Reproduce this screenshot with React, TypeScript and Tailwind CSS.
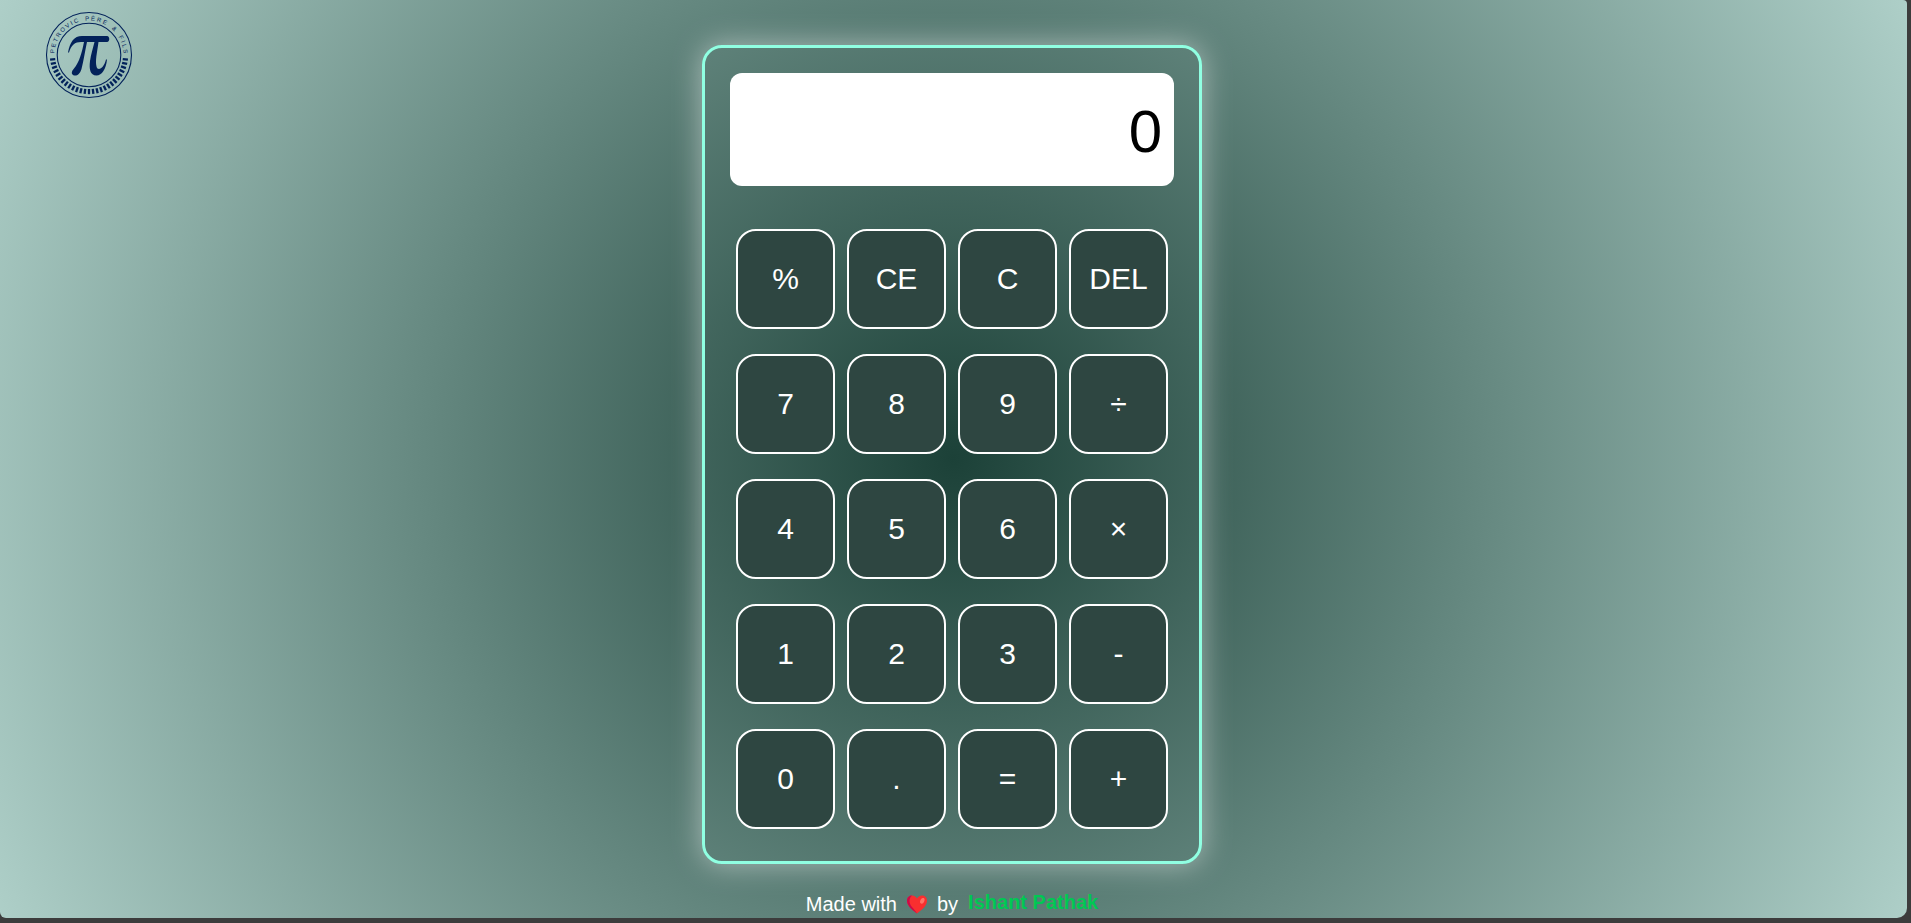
import { useState } from "react";

const keys = ["%", "CE", "C", "DEL", "7", "8", "9", "÷", "4", "5", "6", "×", "1", "2", "3", "-", "0", ".", "=", "+"];

const operators: Record<string, (a: number, b: number) => number> = {
  "+": (a, b) => a + b,
  "-": (a, b) => a - b,
  "×": (a, b) => a * b,
  "÷": (a, b) => a / b,
};

const ticks = Array.from({ length: 27 }, (_, i) => (i - 13) * 6.4);

function Logo() {
  return (
    <svg viewBox="0 0 88 88" className="size-[88px]" role="img" aria-label="Petrovic Père & Fils" fill="none" stroke="#03225a">
      <circle cx="44" cy="44" r="42.5" strokeWidth="1.1" />
      <circle cx="44" cy="44" r="31.8" strokeWidth="1.1" />
      {ticks.map((angle) => (
        <path key={angle} d="M44 78V83.200" strokeWidth="2.3" transform={`rotate(${angle} 44 44)`} />
      ))}
      <path id="logo-arc" d="M9.5 48A34.7 34.7 0 1 1 78.5 48" stroke="none" />
      <text className="text-[6px]" fill="#03225a" stroke="none" fontFamily="'Liberation Sans', sans-serif">
        <textPath href="#logo-arc" startOffset="50%" textAnchor="middle">
          P E T R O V I C &#160; &#160;P È R E &#160; &#160;&amp; &#160; &#160;F I L S
        </textPath>
      </text>
      <path
        d="M23 41.500C25 31 29 25 37 25H62C65 25 65 31 62 31H53.500C52 42 50 50 51.500 55.500C53 61 59 57 61 48.500H62C61 58 57 64.500 51.500 64.500C45 64.500 44 58 45 50C46 43 48 37 49.500 31H42C40 40 38.500 50 36.500 58C35 63 32 65 29.500 64.500C26 64 26 60.500 29 57.500C34.500 51 37 41 39 31H36C30 31 26 34 24 41.500Z"
        fill="#03225a"
        stroke="none"
      />
    </svg>
  );
}

export default function App() {
  const [display, setDisplay] = useState("0");
  const [stored, setStored] = useState<number | null>(null);
  const [operator, setOperator] = useState<string | null>(null);
  const [fresh, setFresh] = useState(true);

  const result = () =>
    operator && stored !== null ? operators[operator](stored, Number(display)) : Number(display);

  const press = (key: string) => {
    if (key === "C") {
      setDisplay("0");
      setStored(null);
      setOperator(null);
      setFresh(true);
    } else if (key === "CE") {
      setDisplay("0");
      setFresh(true);
    } else if (key === "DEL") {
      setDisplay(display.length > 1 ? display.slice(0, -1) : "0");
    } else if (key === "%") {
      setDisplay(String(Number(display) / 100));
    } else if (key === "=") {
      setDisplay(String(result()));
      setStored(null);
      setOperator(null);
      setFresh(true);
    } else if (key in operators) {
      const value = result();
      setDisplay(String(value));
      setStored(value);
      setOperator(key);
      setFresh(true);
    } else if (key === ".") {
      if (fresh) setDisplay("0.");
      else if (!display.includes(".")) setDisplay(display + ".");
      setFresh(false);
    } else {
      setDisplay(fresh || display === "0" ? key : display + key);
      setFresh(false);
    }
  };

  return (
    <div className="min-h-screen bg-[#3c3c3c] pr-1 pb-[5px] font-['Liberation_Sans',Arial,sans-serif]">
      <div className="grid min-h-[calc(100vh-5px)] grid-cols-[1fr_500px_1fr] rounded-tr-sm rounded-br-[10px] rounded-bl-md bg-[radial-gradient(circle_at_center,#1c4138,#aecfc8)] pr-[3px]">
        <header className="pt-[11px] pl-[45px]">
          <Logo />
        </header>
        <main className="pt-[45px]">
          <section aria-label="Calculator" className="rounded-[20px] border-3 border-[#90ffe2] p-[25px] pb-[32px] shadow-[0_0_30px_rgba(255,255,255,0.5)]">
            <input
              aria-label="Result"
              readOnly
              value={display}
              className="block h-[113px] w-full rounded-xl bg-white px-3 pt-1 text-right text-[60px] text-black outline-none"
            />
            <div className="mt-[43px] grid grid-cols-4 gap-x-3 gap-y-[25px] px-1.5">
              {keys.map((key) => (
                <button
                  key={key}
                  type="button"
                  onClick={() => press(key)}
                  className="h-[100px] rounded-[20px] border-2 border-white bg-[#2e4641] pb-0.5 text-[30px] text-white"
                >
                  {key}
                </button>
              ))}
            </div>
          </section>
          <footer className="flex items-center justify-center pt-6 text-xl leading-6 text-white">
            <span className="pt-1">Made with</span>
            <svg viewBox="0 0 20 19" className="mx-2.5 mt-1 h-[19px] w-5" aria-hidden="true">
              <path d="M10 18.500C4 14 0 10.500 0 5.500C0 2.500 2.300.5 5 .5C7.500.5 9.200 2 10 3.600C10.800 2 12.500.5 15 .5C17.700.5 20 2.500 20 5.500C20 10.500 16 14 10 18.500Z" fill="#f92f2f" />
              <path d="M10 18.500C4 14 0 10.500 0 5.500C0 2.500 2.300.5 5 .5C2 3 1.500 8 5 12C7 14.500 9 16.500 10 18.500Z" fill="#ca0b4a" />
              <ellipse cx="15.300" cy="5.800" rx="2" ry="3" fill="#ff7366" transform="rotate(25 15.300 5.800)" />
            </svg>
            <span className="pt-1">by</span>
            <a href="#author" className="ml-2.5 font-bold text-[#00c853]">Ishant Pathak</a>
          </footer>
        </main>
      </div>
    </div>
  );
}
